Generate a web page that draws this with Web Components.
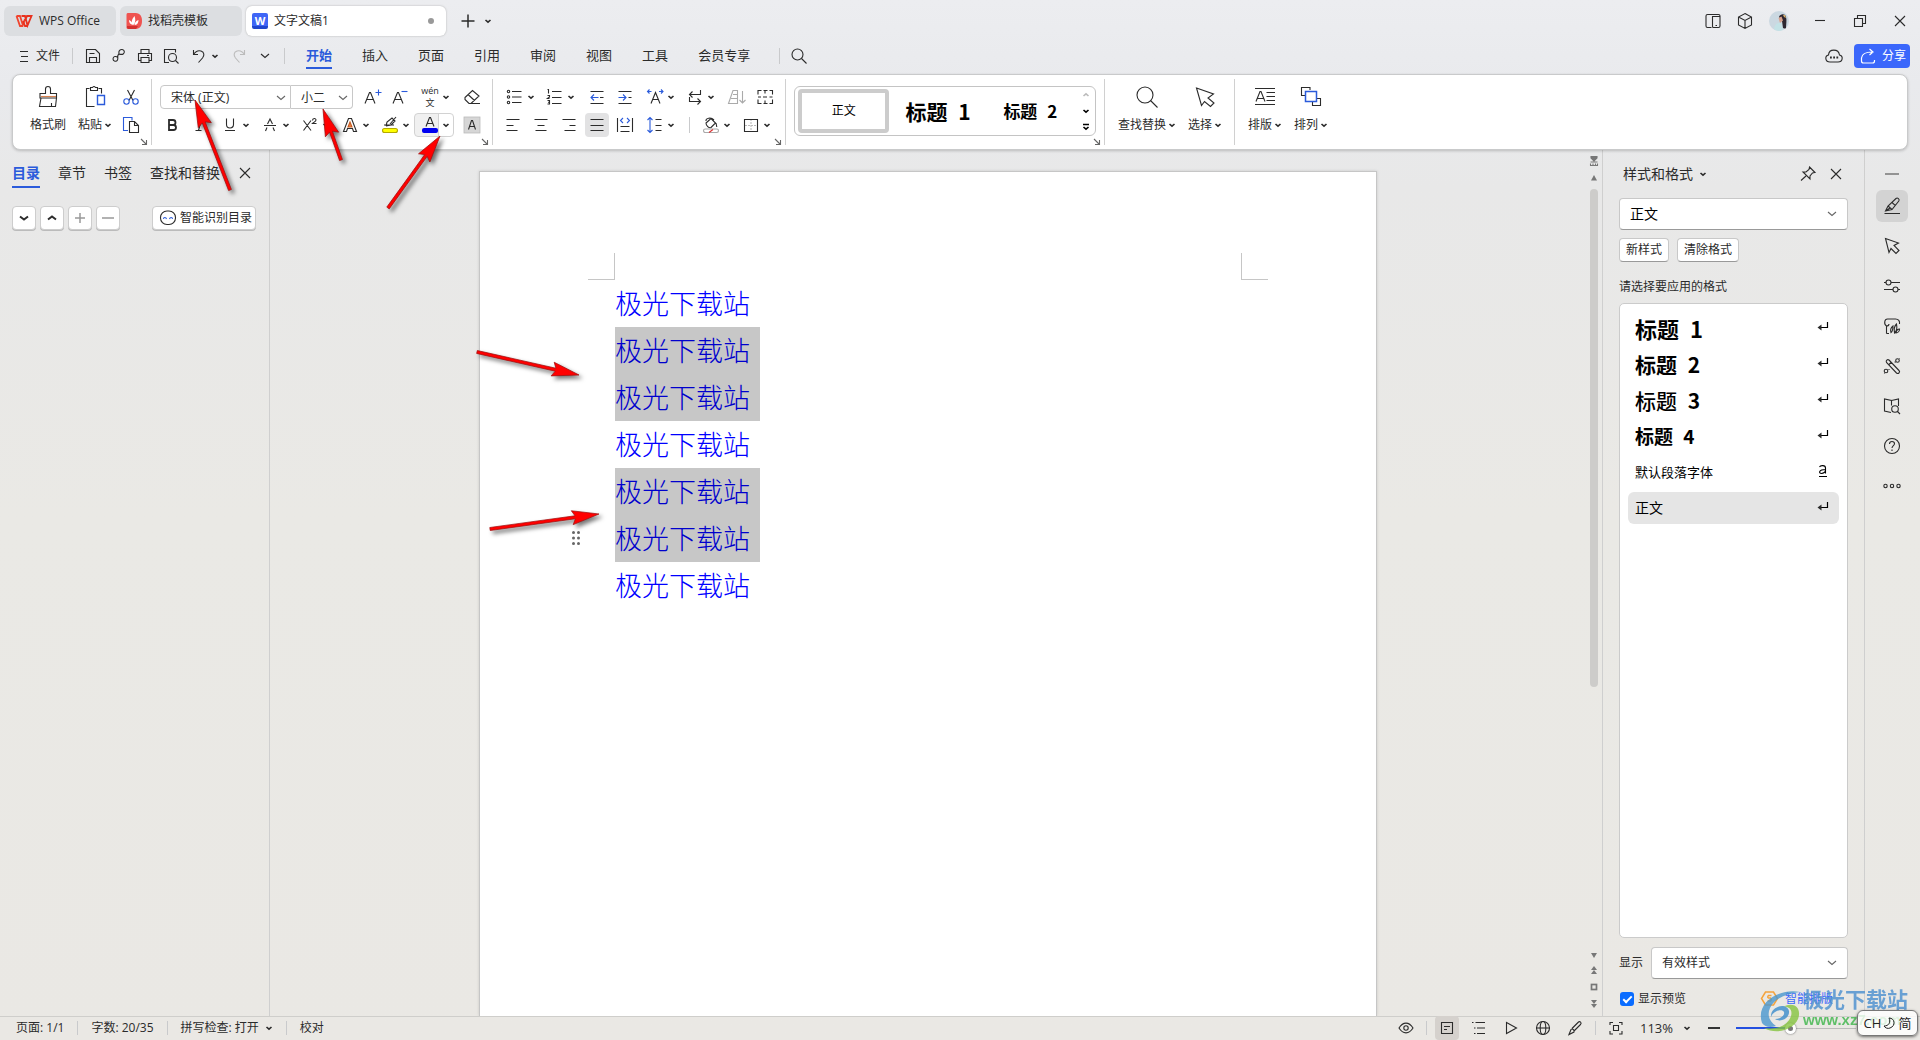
<!DOCTYPE html>
<html lang="zh-CN">
<head>
<meta charset="utf-8">
<title>WPS Office</title>
<style>
html,body{height:100%;margin:0}
body{font:12px/18px "Open Sans","Noto Sans CJK SC",sans-serif;color:#2b2b2b;overflow:hidden;
--blue:#2b5bdb;--line:#cfcfd0}
</style>
</head>
<body>
<wps-app></wps-app>
<script>
const ICONS={
wps:'<path d="M4.500 7h3.500l3 9.500M4.500 7l3.500 10h2.500l2.500-7" stroke="#f0442e" stroke-width="1.800"/><path d="M9.500 7h3.500l2.500 9.500 4-9.500h-4.500l-2 5M15 17h-2l-2-5" stroke="#e8321f" stroke-width="1.800"/>',
daoke:'<path d="M6.500 4h7c5 0 6.500 4 6.500 8s-1.500 8-6.500 8H6.500c-2 0-2-1-2-2V6c0-2 1-2 2-2z" fill="#ef5350" stroke="none"/><path d="M5 17h11l-2 3H7c-2 0-2-1-2-3z" fill="#d3302f" stroke="none"/><path d="M11.500 16c-3-3-1.500-6 1-9 1 3 1.500 6-1 9zM11 16c-3-.5-4-2.500-4-5 2 1 3.500 2.500 4 5zM12.500 16c0-2.500 1.500-4 4-5 0 3-1.500 5-4 5z" fill="#fff" stroke="none"/>',
plus:'<path d="M12 5.500v13M5.500 12h13" stroke-width="1.500"/>',
plusG:'<path d="M12 7v10M7 12h10" stroke="#999" stroke-width="1.500"/>',
minusG:'<path d="M6 12h12" stroke="#999" stroke-width="1.500"/>',
caret:'<path d="M9.500 11l2.500 2.200 2.500-2.200" stroke-width="1.600"/>',
chev:'<path d="M8 10l4 3.500 4-3.500"/>',
down:'<path d="M8 10.500l4 3 4-3" stroke-width="2"/>',
up:'<path d="M8 13.500l4-3 4 3" stroke-width="2"/>',
upG:'<path d="M9.500 13l2.500-2.200 2.500 2.200" stroke="#bbb" stroke-width="1.600"/>',
more:'<path d="M9 9.500h6M9.500 12l2.500 2.200 2.500-2.200" stroke-width="1.600"/>',
menu:'<path d="M8 7.500h8M9 12.500h7M8 17.500h8" stroke-width="1"/>',
save:'<path d="M5.500 5.500h9l4 4v9h-13zM8.500 18v-4.500h7V18M8.500 9.500h5"/>',
link:'<path d="M10.500 13.500c-1-1.500-4.500-1.500-4.500 1.500 0 2.500 3.500 3 4.500 1 .8-1.600-.2-3.500.5-5 .8-1.600 3.500.2 5.200-1 1.800-1.300 1.200-3.500-.2-4.200-1.500-.8-3.500 0-4 1.700-.3 1 .2 2-.3 3.500"/>',
print:'<path d="M8 9V5.500h8V9M8 16.500H5.500V9.500h13v7H16M8 13.500h8v5H8zM14 11.500h2"/>',
preview:'<path d="M10 18.500H5.500v-13h11v3"/><circle cx="13.500" cy="13.500" r="4"/><path d="M16.500 16.500l3 3"/>',
undo:'<path d="M6.500 6v4.500H11M6.500 10.500c2-3 4.500-4.500 7.500-3.500 3.500 1.200 3.500 4.500 1.500 7l-4 4.500" />',
redo:'<path d="M17.500 6v4.500H13M17.500 10.500c-2-3-4.500-4.500-7.500-3.500-3.500 1.200-3.500 4.500-1.500 7l4 4.500" stroke="#bbb"/>',
search:'<circle cx="10.500" cy="10.500" r="5.500"/><path d="M14.500 14.500l5 5"/>',
tablet:'<path d="M10.500 18.500h-4a1.500 1.500 0 0 1-1.500-1.500V7a1.500 1.500 0 0 1 1.500-1.500h11A1.500 1.500 0 0 1 19 7v10a1.500 1.500 0 0 1-1.500 1.500h-5a1 1 0 0 1-1-1v-10M11.500 8v-.5h7M14.500 16.500h1.500"/>',
cube:'<path d="M12 4.500l6.500 3.500v8L12 19.500 5.500 16V8zM5.500 8l6.500 3.500L18.500 8M12 11.500v8"/>',
min:'<path d="M7 11.500h10"/>',restore:'<path d="M6.500 9.500h8v8h-8zM9.500 9.500v-3h8v8h-3"/>',close:'<path d="M7 7l10 10M17 7L7 17"/>',
cloud:'<path d="M8 18c-5 0-5.500-6-1.500-7C7 4.500 16.500 4.500 17.500 11c4 1 3.500 7-1.500 7z"/><path d="M8 13.500h1.800M11.200 13.500h1.800M14.400 13.500h1.800" stroke-width="1.800"/>',
share:'<path d="M5.500 14v3q0 2 2 2h9q2 0 2-2v-1M5.500 14c.5-4 4.500-6 10.500-6M13.500 5l3.500 3-3.500 3" stroke="#fff" stroke-width="1.200"/>',
cut:'<path d="M8.500 5l5.500 10.500M15.500 5L10 15.500"/><circle cx="7.500" cy="16.500" r="2.700" stroke="#2b5bdb"/><circle cx="16.500" cy="16.500" r="2.700" stroke="#2b5bdb"/>',
copy:'<path d="M9 17.500H4.500v-13H13v3" stroke="#2b5bdb"/><path d="M10.500 8.500h5l4 4v7h-9zM15.500 8.500v4h4"/>',
fontUp:'<path d="M5 18.500l4.500-11h1l4.500 11M6.500 14.500h7"/><path d="M15.500 7.500h6M18.500 4.500v6" stroke="#2b5bdb"/>',
fontDn:'<path d="M5 18.500l4.500-11h1l4.500 11M6.500 14.500h7"/><path d="M13.500 6.500h6" stroke="#2b5bdb"/>',
eraser:'<path d="M5 12.500l7.500-7 6.500 5.500-8 7.500H9l-4-4zM8 9.500l6.500 6M10 18.500h10"/>',
bold:'<path d="M9 7h4a2.500 2.500 0 0 1 0 5H9zM9 12h4.500a2.500 2.500 0 0 1 0 5H9z" stroke-width="1.800"/>',
italic:'<path d="M10.500 6.500h6M7.500 17.500h6M13.500 6.500l-3 11"/>',
under:'<path d="M8.500 5.500v6a3.500 3.500 0 0 0 7 0v-6M7 17.500h10"/>',
strike:'<path d="M6 12.500h12M9.500 11L12 6l2.500 5M7.500 18l1.500-3.500M16.500 18L15 14.500"/>',
sup:'<path d="M5.500 7.500l7.500 10M13 7.500l-7.500 10M14.500 7.500c0-2.500 3.500-2.500 3.500-.5 0 1.500-2 2-3.500 3.500h4"/>',
outA:'<path d="M5.500 18.500l5-13h3l5 13h-3l-1-3h-5l-1 3z"/><path d="M10 14l2-5 2 5z" fill="#ee8a4a" stroke="#c55a20"/>',
hilite:'<path d="M8 13l1-4 5-4 3 3-4 4-5 1M6 12l10 0M12 11l6-7"/><rect x="4.500" y="15.500" width="15" height="4" rx="2" fill="#ff0" stroke="#b5a900"/>',
fcolor:'<path d="M8 13.500l3.500-9h1l3.500 9M9.500 10.500h5"/><rect x="4" y="15" width="16" height="5" rx="2" fill="#0000f0" stroke="none"/>',
shadeA:'<rect x="4" y="4" width="16" height="16" fill="#d6d6d6" stroke="#bbb" stroke-width=".8"/><path d="M8.500 16.500l3-9h1l3 9M9.500 13.500h5"/>',
bullets:'<circle cx="5.500" cy="6.500" r="1.200"/><circle cx="5.500" cy="12" r="1.200"/><circle cx="5.500" cy="17.500" r="1.200"/><path d="M9 6.500h9.500M9 12h9.500M9 17.500h9.500"/>',
numbers:'<path d="M4.500 4.500h1v4M4.500 10.500h2v1.500l-2 1.500h2M4.500 15.500h2v3.500h-2M5 17.200h1.500M9 6.500h9.500M9 12.500h9.500M9 18.500h9.500"/>',
outdent:'<path d="M5.500 6.500h13M5.500 18.500h13M15 12.500h3.500"/><path d="M6 12.500h7.500M9 9.500l-3 3 3 3" stroke="#2b5bdb"/>',
indent:'<path d="M5.500 6.500h13M5.500 18.500h13M15.500 12.500h3"/><path d="M5.500 12.500H13M10 9.500l3 3-3 3" stroke="#2b5bdb"/>',
charW:'<path d="M8 18.500l4.500-11 4.500 11M9.500 14.500h6"/><path d="M4.500 6.500h4M6.500 4.500l-2 2 2 2M16 6.500h4M18 4.500l2 2-2 2" stroke="#2b5bdb"/>',
wrap:'<path d="M17.500 5v4.500H6.500M9.500 6.500l-3 3 3 3M6.500 12v4.500h11M14.500 13.500l3 3-3 3"/>',
sort:'<g stroke="#aaa"><path d="M8 5.500h4.500v13h-9zM8 9.500h4.500M6 13.500h6.500M17.500 6v12M14.500 15l3 3 3-3"/></g>',
tabs:'<path d="M5 9.500v-4h3.500M10.500 5.500h4M16.500 5.500h3v4M5 14.500v4h3.500M10.500 18.500h4M16.500 18.500h3v-4M5 12h3M10 12h4M16.500 12h3M12 5.500v3M12 15.500v3"/>',
left:'<path d="M5.500 6.500h13M5.500 12.500h7M5.500 17.500h11"/>',center:'<path d="M5.500 6.500h13M8.500 12.500h7M6.500 17.500h11"/>',right:'<path d="M5.500 6.500h13M12.500 12.500h6M7.500 17.500h11"/>',just:'<path d="M5.500 6.500h13M5.500 12.500h13M5.500 17.500h13"/>',
dist:'<path d="M4.500 5v14M19.500 5v14M7.500 13.500h9M7.500 18.500h9"/><path d="M10 5L7.500 7.500 10 10M14 5l2.500 2.500L14 10" stroke="#2b5bdb"/>',
lsp:'<path d="M12.500 6.500h6M12.500 12.500h6M12.500 17.500h6"/><path d="M7 5v14.500M4.500 7L7 4.500 9.500 7M4.500 17L7 19.500 9.500 17" stroke="#2b5bdb"/>',
shade:'<path d="M7 10l5-4.500 4.500 4.500-4.500 4.500c-2 1-5-2-5-4.500zM7 8c-.5-3 5-4 8-1M17 10l.8 4"/><rect x="4.500" y="16" width="15" height="3.500" rx="1.700" stroke="#aaa"/><path d="M10 19.500l4-3" stroke="#d33"/>',
border:'<path d="M12 6v13M6 12.500h12" stroke="#bbb" stroke-dasharray="2 1"/><path d="M5.500 6.500h13v12h-13z"/>',
corner:'<path d="M9 9l5 5M14.500 10v4.500H10" stroke="#666"/>',
robot:'<rect x="4.500" y="5" width="15" height="13.500" rx="6.500"/><path d="M7.500 13c0-2 2.500-2 3 0M13.500 13c.5-2 3-2 3 0" stroke="#2b5bdb"/>',
pin:'<path d="M13.500 5l5.500 5.500-2.500.5-2.500 3 0 3-7-7 3 0 3-2.500zM10 14l-5 4.500"/>',
pen:'<path d="M4.500 19.500h15.500M5.500 17l2.500-5 8-7.500c1.500-1.300 4 .7 2.800 2.500L12 15.500zM8 12l4 3.500M12 8.500l3.500 3.200M5.500 17l4.500-3"/>',
arrow:'<path d="M5.500 4.500l13 4.500-4.500 2.500 5 5-3 3-5-5-2 4z"/>',
slid:'<circle cx="8.500" cy="8.500" r="2.500"/><circle cx="15.500" cy="15.500" r="2.500"/><path d="M4 8.500h2M11 8.500h9M4 15.500h9M18 15.500h2"/>',
assets:'<path d="M6.500 19.500V12c-3-2-2-7 1-7h8c3 0 4.500 2 4 5M6.500 12c1.500 0 2.500-1 2.500-2M6.500 19.500H9M11 18.500c-1-3 0-5 2-6.500 0 3 0 5-2 6.500zM14.500 19c-1-5 0-7 2-9 .8 4 .5 7-2 9zM16 19c.5-3 2-4 3.500-4 0 2-1.500 4-3.500 4z"/>',
tools:'<path d="M6.500 8.500c-1-2 1-3.500 2.500-2.500l10 10.500c1.500 1.500-.5 4-2.500 2.500zM8.500 11l3-3"/><circle cx="17.500" cy="6.500" r="1.800"/><circle cx="6" cy="17" r="1.800"/><path d="M14.500 8h1.500M9 15v1M19.500 4.500h.5M4.500 19.500v.5"/>',
read:'<path d="M11 18.500l-6.500-1.500v-12l7 1.500v5M11.500 6.500l7-1.500v7"/><circle cx="15" cy="15" r="3.300"/><path d="M17.500 17.500l2.500 2.500"/>',
help:'<circle cx="12" cy="12" r="7.500"/><path d="M9.500 10c0-3.500 5-3.200 5-.3 0 1.800-2.500 2-2.500 4.300M12 15.500v1.500"/>',
dots:'<circle cx="5.500" cy="12" r="1.700"/><circle cx="12" cy="12" r="1.700"/><circle cx="18.500" cy="12" r="1.700"/>',
dash:'<path d="M5 12h14" stroke="#8a8a8a" stroke-width="1.800"/>',
enter:'<path d="M16.500 6v5.500H8" stroke-width="1.200"/><path d="M10.500 8.500l-4 3 4 3z" fill="#2b2b2b" stroke="none"/>',
chara:'<path d="M8.500 7c1-2 6-2 6 1v5.500M14.500 9.500c-7 0-7 4-4 4 2 0 4-1.500 4-3M8 16.500h8"/>',
eye:'<path d="M5 12c4-6.500 10-6.500 14 0-4 6.500-10 6.500-14 0z"/><circle cx="12" cy="12" r="2.200"/>',
doc:'<path d="M6.500 6.500h11v11h-11zM9 10.500h6M9 13.500h3"/>',
outl:'<path d="M5 6.500h1.500M8.500 6.500h9.500M7 12h1.500M10 12h8M7 17.500h1.500M10 17.500h8"/>',
play:'<path d="M7.500 6.500l10 5.500-10 5.500z"/>',
globe:'<circle cx="12" cy="12" r="6.500"/><ellipse cx="12" cy="12" rx="2.800" ry="6.500"/><path d="M5.500 12h13"/>',
brush:'<path d="M6 18.500l2-5c1-1.500 4 .5 3 2.500zM9 12.500l6-6c2-2 4 .5 2.500 2l-6 6"/>',
fit:'<path d="M6 9V6.500h3M15 6.500h3V9M18 15v3h-3M9 18H6v-3M9.500 9.500h5v5h-5z"/>',
coin:'<path d="M8.500 5h8l4 6.500-4 6.500h-8l-4-6.500z" stroke="#f5a33c" stroke-width="1.500"/><path d="M14.500 8.500h-3q-1.500 1.500 0 2.500h2q1.500 1.500 0 3h-3" stroke="#f5a33c" stroke-width="1.500"/>',
sTop:'<path d="M9 6.500h6v1.500l-3 3-3-3zM8.500 12h7M8.500 15.500v-2M11 15.500v-2M13.500 15.500v-2M15.500 15.500v-2M8 15.500h8" fill="#777" stroke="#777"/>',
sUp:'<path d="M12 9l3 5.500h-6z" fill="#777" stroke="none"/>',sDn:'<path d="M12 15l3-5H9z" fill="#777" stroke="none"/>',
sUp2:'<path d="M12 7l3 4H9zM12 11l3 4H9z" fill="#777" stroke="none"/>',sDn2:'<path d="M12 17l3-4H9zM12 13l3-4H9z" fill="#777" stroke="none"/>',
sBox:'<rect x="9.500" y="9.500" width="5" height="5" stroke="#777" stroke-width="1.700"/>',
grip:'<g fill="#666" stroke="none"><circle cx="9.500" cy="6.500" r="1.500"/><circle cx="14.500" cy="6.500" r="1.500"/><circle cx="9.500" cy="12" r="1.500"/><circle cx="14.500" cy="12" r="1.500"/><circle cx="9.500" cy="17.500" r="1.500"/><circle cx="14.500" cy="17.500" r="1.500"/></g>',
painter:'<path d="M6 10.500h5.500V6q0-2.500 2.500-2.500T16.500 6v4.500h6v4.500H6zM7 15l-1.500 8.500h16l1-8.500M17.500 23.500V20" /><path d="M7 13.500h15" stroke="#d9824f"/>',
paste:'<path d="M8.500 5.500H5.500v18h8M20.500 10.500v-5h-3M9.500 4.500h2q1.500-2 3 0h2v3h-7z"/><path d="M16.500 12.500h7v9h-7z" stroke="#2b5bdb" stroke-width="1.400"/>',
find:'<circle cx="12" cy="12" r="8"/><path d="M17.500 17.500l7 7"/>',
select:'<path d="M5.500 5l17 6-5.500 4 6 5-3.500 3.500-6-5-3 4z"/>',
layout:'<path d="M4 5.500h20M4 21.500h20M15.500 9.500h8.500M15.500 13.500h8.500M15.500 17.500h8.500M5 18.500l4-10h1l4 10M6.500 15.500h6"/>',
arrange:'<path d="M8 12.500H4.500v-8H13V7M19.500 15.500h4v7h-8V19"/><path d="M8.500 8.500h11v10h-11z" stroke="#2b5bdb" stroke-width="1.500"/>'
};
function define(name,html,setup){
  customElements.define(name,class extends HTMLElement{
    constructor(){super();this.attachShadow({mode:'open'})}
    connectedCallback(){
      const t=document.createElement('template');
      t.innerHTML='<style>*{box-sizing:border-box}:host{display:block;box-sizing:border-box}button{font:inherit;color:inherit;background:none;border:0;padding:0;margin:0}a{color:inherit;text-decoration:none}</style>'+(typeof html==='function'?html(this):html);
      this.shadowRoot.replaceChildren(t.content.cloneNode(true));
      if(setup)setup(this);
    }
  });
}
const at=(e,n,d='')=>e.getAttribute(n)??d;

define('wps-icon',e=>{const s=+at(e,'size',24);return `<style>:host{display:inline-flex;flex:none}svg{display:block}</style><svg width="${s}" height="${s}" viewBox="0 0 ${s} ${s}" fill="none" stroke="currentColor" stroke-width="1.1" aria-hidden="true">${ICONS[at(e,'name')]||''}</svg>`});
define('wps-caret','<style>:host{width:8px;display:flex;justify-content:center;flex:none}</style><wps-icon name="caret"></wps-icon>');
define('wps-sep',`<style>:host{width:1px;background:#c9cacc;flex:none;height:16px}</style>`);

/* small ribbon command: an icon, or an icon with a drop-down arrow */
define('wps-tool',e=>`<style>:host{flex:none}
button{display:flex;align-items:center;justify-content:center;width:28px;height:24px;border-radius:4px}
:host([split]) button{width:40px;justify-content:flex-start;padding-left:4px}
:host([active]) button{width:24px;background:#e2e2e3}
:host([active]){padding:0 2px}
:host([boxed]) button{border:1px solid #d2d2d2;background:linear-gradient(90deg,#f0f0f0 23px,#d2d2d2 23px,#d2d2d2 24px,#fff 24px);padding-left:3px}
</style><button aria-label="${at(e,'label')}"><slot><wps-icon name="${at(e,'icon')}"></wps-icon></slot>${e.hasAttribute('split')?'<wps-caret></wps-caret>':''}</button>`);

/* large ribbon command: icon above a caption */
define('wps-big',e=>`<style>:host{flex:none;margin-bottom:4px}
button{display:flex;flex-direction:column;align-items:center;height:52px;justify-content:space-between}
.i{display:flex;align-self:stretch;justify-content:center}
span{display:flex;align-items:center;gap:2px;height:20px;white-space:nowrap}
</style><button><div class="i"><wps-icon name="${at(e,'icon')}" size="28"></wps-icon></div><span><slot></slot>${e.hasAttribute('drop')?'<wps-caret></wps-caret>':''}</span></button>`);

define('wps-group',`<style>:host{display:flex;position:relative;border-right:1px solid #d0d0d0;height:66px;flex:none;align-items:center}
:host{padding-bottom:2px}:host([last]){border:0}
.lc{position:absolute;right:-5px;bottom:-9px}</style><slot></slot>`,e=>{if(e.hasAttribute('launch')){const i=document.createElement('wps-icon');i.className='lc';i.setAttribute('name','corner');e.shadowRoot.append(i)}});

/* drop-down box */
define('wps-select',e=>`<style>:host{display:grid;background:#fff;border:1px solid #c8c8c8;border-radius:4px;align-items:center}
select,wps-icon{grid-area:1/1}select{appearance:none;border:0;background:none;font:inherit;color:inherit;width:100%;height:100%;padding:0 16px 0 10px;outline:0}
wps-icon{justify-self:end;pointer-events:none;margin-right:-3px;color:#666}
:host([field]){height:32px;border-bottom-color:#999}:host([field]) wps-icon{margin-right:3px}</style><select aria-label="${at(e,'label')}"><option>${at(e,'value')}</option></select><wps-icon name="chev"></wps-icon>`);

define('wps-titlebar',`<style>:host{display:flex;height:42px;align-items:center;padding-left:4px;flex:none}
.tab{display:flex;align-items:center;height:30px;border-radius:6px;background:#dcdee1;margin-right:4px;padding:0 12px 0 8px;gap:2px}
.t1{width:112px;white-space:nowrap}.t1 wps-icon{margin-right:1px}.t2{width:122px;padding-left:2px}
.t3{width:200px;background:#fff;box-shadow:0 0 2px #aaa;padding-left:2px}
.logo{width:16px;height:16px;margin:0 4px 0 4px;background:linear-gradient(#3f66f6 80%,#1f45cc 80%);border-radius:2px;color:#fff;font:bold 11px/15px "Open Sans",sans-serif;text-align:center}
.dot{width:6px;height:6px;border-radius:3px;background:#999;margin-left:auto}
.new{display:flex;align-items:center;gap:4px;margin-left:6px}
.r{margin-left:auto;display:flex;align-items:center;padding-right:8px;}
.tools{display:flex;gap:8px;align-items:center;margin-right:19px}
.win{display:flex;gap:16px}
.av{display:block;margin-left:4px}
</style>
<button class="tab t1"><wps-icon name="wps"></wps-icon>WPS Office</button>
<button class="tab t2"><wps-icon name="daoke"></wps-icon>找稻壳模板</button>
<button class="tab t3"><span class="logo">W</span>文字文稿1<i class="dot"></i></button>
<button class="new" aria-label="新建"><wps-icon name="plus"></wps-icon><wps-caret></wps-caret></button>
<div class="r"><div class="tools"><wps-icon name="tablet"></wps-icon><wps-icon name="cube"></wps-icon>
<svg class="av" width="20" height="20" viewBox="0 0 20 20" role="img" aria-label="头像"><clipPath id="c"><circle cx="10" cy="10" r="10"/></clipPath><g clip-path="url(#c)"><path fill="#cbd8e1" d="M0 0h20v20H0z"/><path fill="#c3e2e6" d="M5 20c0-6 3-9 7-8l2 8z"/><path fill="#2e2730" d="M10 6c1-3 6-4 7 0 1 3 0 7 0 12l-3-1-1-7z"/><path fill="#d9a48f" d="M9.500 7l3-1.500 1.500 4-3 2.500z"/><path fill="#d8b06a" d="M14 4l2 0 1 3-2-1z"/></g></svg></div>
<div class="win"><wps-icon name="min"></wps-icon><wps-icon name="restore"></wps-icon><wps-icon name="close"></wps-icon></div></div>`);

define('wps-menubar',`<style>:host{display:flex;height:32px;align-items:center;flex:none;padding:0 10px 4px 12px;}
.file{display:flex;align-items:center;margin-right:12px}
.q{display:flex;align-items:center;margin:0 7px 0 8px;gap:2px}
.q wps-tool{margin:0 2px 0 -2px}
nav{display:flex;gap:30px;margin:0 29px 0 21px;font-size:13px}
nav a{display:flex;height:26px;align-items:center;border-bottom:2px solid transparent;}
nav a.on{color:var(--blue);font-weight:700;border-color:var(--blue)}
.find{margin-left:5px}
.r{margin-left:auto;display:flex;align-items:center;gap:8px}
.share{display:flex;align-items:center;gap:2px;background:#3b67fb;color:#fff;height:24px;width:56px;border-radius:4px;padding:0 0 0 2px}
</style>
<button class="file"><wps-icon name="menu"></wps-icon>文件</button><wps-sep></wps-sep>
<div class="q"><wps-icon name="save"></wps-icon><wps-icon name="link"></wps-icon><wps-icon name="print"></wps-icon><wps-icon name="preview"></wps-icon><wps-tool icon="undo" label="撤销" split></wps-tool><wps-icon name="redo"></wps-icon><wps-icon name="chev"></wps-icon></div>
<wps-sep></wps-sep>
<nav><a href="#" class="on">开始</a><a href="#">插入</a><a href="#">页面</a><a href="#">引用</a><a href="#">审阅</a><a href="#">视图</a><a href="#">工具</a><a href="#">会员专享</a></nav>
<wps-sep></wps-sep><wps-tool class="find" icon="search" label="搜索"></wps-tool>
<div class="r"><wps-icon name="cloud"></wps-icon><button class="share"><wps-icon name="share"></wps-icon>分享</button></div>`);

define('wps-ribbon',`<style>:host{display:flex;height:76px;margin:0 12px;background:#fff;border:1px solid #c9cacb;border-radius:8px;box-shadow:0 1px 3px #0003;padding:4px 0;flex:none;position:relative;z-index:1}
.rows{display:flex;flex-direction:column;gap:4px;}
.row{display:flex;align-items:center;height:24px}
.clip{padding:0 6px 2px 17px;width:139px}.clip .rows{margin-left:5px}.clip wps-big+wps-big{margin-left:12px}
.font{padding-left:6px;width:341px}.font .row:first-child{padding:0 0 0 2px}
.para{padding-left:6px;width:293px}
.combo{display:flex;width:193px;margin-right:5px}
.combo wps-select{height:24px;flex:62}.combo wps-select:first-child{flex:131;border-radius:4px 0 0 4px}.combo wps-select+wps-select{border-left:0;border-radius:0 4px 4px 0}
.sp{margin-left:4px}
.wen{display:flex;flex-direction:column;width:24px;text-align:center;font-size:9px;line-height:12px}
.rows wps-sep{margin:0 5px 0 10px}
.gallery{display:flex;align-items:center;width:302px;height:50px;border:1px solid #c4c4c4;border-radius:6px;padding-left:3px;color:#000}
.gallery button{white-space:nowrap}.gallery i{font-style:normal;margin-left:6px}
.sel{width:92px;height:44px;border:4px solid #ccc;border-radius:4px}
.h1{font:700 21px/24px "Noto Sans CJK SC",sans-serif;width:98px}
.h2{font:700 17px/24px "Noto Sans CJK SC",sans-serif;width:88px}
.nav{display:flex;flex-direction:column;margin-left:auto;padding-right:4px}
.nav wps-icon{height:16px;align-items:center;width:24px;margin-right:-7px}
.styles{padding:0 8px 2px 8px}
.big{gap:12px;padding:0 12px 2px 13px}
</style>
<wps-group class="clip" launch><wps-big icon="painter">格式刷</wps-big><wps-big icon="paste" drop>粘贴</wps-big><div class="rows"><wps-tool icon="cut" label="剪切"></wps-tool><wps-tool icon="copy" label="复制"></wps-tool></div></wps-group>
<wps-group class="font" launch><div class="rows"><div class="row"><div class="combo"><wps-select label="字体" value="宋体 (正文)"></wps-select><wps-select label="字号" value="小二"></wps-select></div><wps-tool icon="fontUp" label="增大字号"></wps-tool><wps-tool icon="fontDn" label="减小字号"></wps-tool><wps-tool label="拼音指南" split><span class="wen"><span>wén</span><span>文</span></span></wps-tool><wps-tool class="sp" icon="eraser" label="清除格式"></wps-tool></div>
<div class="row"><wps-tool icon="bold" label="加粗"></wps-tool><wps-tool icon="italic" label="倾斜"></wps-tool><wps-tool icon="under" label="下划线" split></wps-tool><wps-tool icon="strike" label="删除线" split></wps-tool><wps-tool icon="sup" label="上标" split></wps-tool><wps-tool icon="outA" label="文字效果" split></wps-tool><wps-tool icon="hilite" label="突出显示" split></wps-tool><wps-tool icon="fcolor" label="字体颜色" split boxed></wps-tool><wps-tool class="sp" icon="shadeA" label="字符底纹"></wps-tool></div></div></wps-group>
<wps-group class="para" launch><div class="rows"><div class="row"><wps-tool icon="bullets" label="项目符号" split></wps-tool><wps-tool icon="numbers" label="编号" split></wps-tool><wps-tool class="sp" icon="outdent" label="减少缩进量"></wps-tool><wps-tool icon="indent" label="增加缩进量"></wps-tool><wps-tool icon="charW" label="中文版式" split></wps-tool><wps-tool icon="wrap" label="换行" split></wps-tool><wps-tool class="sp" icon="sort" label="排序"></wps-tool><wps-tool icon="tabs" label="制表位"></wps-tool></div>
<div class="row"><wps-tool icon="left" label="左对齐"></wps-tool><wps-tool icon="center" label="居中"></wps-tool><wps-tool icon="right" label="右对齐"></wps-tool><wps-tool icon="just" label="两端对齐" active></wps-tool><wps-tool icon="dist" label="分散对齐"></wps-tool><wps-tool icon="lsp" label="行距" split></wps-tool><wps-sep></wps-sep><wps-tool icon="shade" label="底纹" split></wps-tool><wps-tool icon="border" label="边框" split></wps-tool></div></div></wps-group>
<wps-group class="styles" launch><div class="gallery"><button class="sel">正文</button><button class="h1">标题 <i>1</i></button><button class="h2">标题 <i>2</i></button><div class="nav"><wps-icon name="upG"></wps-icon><wps-icon name="caret"></wps-icon><wps-icon name="more"></wps-icon></div></div></wps-group>
<wps-group class="big"><wps-big icon="find" drop>查找替换</wps-big><wps-big icon="select" drop>选择</wps-big></wps-group>
<wps-group class="big" last><wps-big icon="layout" drop>排版</wps-big><wps-big icon="arrange" drop>排列</wps-big></wps-group>`);

define('wps-nav-pane',`<style>:host{width:270px;flex:none;border-right:1px solid #cfcfcf;padding:8px 12px}
nav{display:flex;gap:18px;font-size:14px;height:30px;}
nav a{display:flex;align-items:center;border-bottom:2px solid transparent;white-space:nowrap;padding-top:2px}
nav a.on{color:var(--blue);font-weight:700;border-color:var(--blue)}
nav wps-icon{align-self:center;margin-left:-5px}
.bar{display:flex;gap:4px;margin-top:18px}
button{background:#fff;border:1px solid #cdcdcd;border-radius:4px;height:24px;width:24px;display:flex;align-items:center;justify-content:center;box-shadow:0 1px 0 #bbb}
.smart{width:104px;margin-left:auto;margin-right:1px;white-space:nowrap}</style>
<nav><a href="#" class="on">目录</a><a href="#">章节</a><a href="#">书签</a><a href="#">查找和替换</a><wps-icon name="close"></wps-icon></nav>
<div class="bar"><button aria-label="展开"><wps-icon name="down"></wps-icon></button><button aria-label="折叠"><wps-icon name="up"></wps-icon></button><button aria-label="增加"><wps-icon name="plusG"></wps-icon></button><button aria-label="减少"><wps-icon name="minusG"></wps-icon></button><button class="smart"><wps-icon name="robot"></wps-icon>智能识别目录</button></div>`);

define('wps-line',`<style>:host{width:fit-content;height:47px;line-height:45px;padding-right:10px;white-space:nowrap}:host([selected]){background:#c7c7c7;color:#0000cd}</style><slot></slot>`);

define('wps-canvas',`<style>:host{display:flex;flex:1;min-width:0}
.view{flex:1;display:flex;justify-content:center;padding-top:21px;overflow:hidden}
.page{width:898px;background:#fff;border:1px solid #c6c6c6;border-bottom:0;box-shadow:0 0 3px #0002;padding:81px 108px 0}
.marks{display:flex;justify-content:space-between}
.marks i{width:27px;height:27px;border:solid #c6c6c6;border-width:0 1px 1px 0}.marks i+i{border-width:0 0 1px 1px}
.text{position:relative;margin:0 27px;font:300 27px/45px "Noto Sans CJK SC",sans-serif;color:#0000ff}
.grip{position:absolute;left:-51px;top:246px;line-height:0}
.sb{width:16px;display:flex;flex-direction:column;align-items:center;padding:4px 0 5px}
.sb wps-icon{height:16px;align-items:center}
.track{flex:1;width:8px;margin:3px 0}.track i{display:block;height:66%;background:#cdccca;border-radius:4px}
</style>
<div class="view"><div class="page"><div class="marks"><i></i><i></i></div><div class="text">
<wps-line>极光下载站</wps-line><wps-line selected>极光下载站</wps-line><wps-line selected>极光下载站</wps-line><wps-line>极光下载站</wps-line><wps-line selected>极光下载站</wps-line><wps-line selected>极光下载站</wps-line><wps-line>极光下载站</wps-line><span class="grip"><wps-icon name="grip"></wps-icon></span></div></div></div>
<div class="sb"><wps-icon name="sTop"></wps-icon><wps-icon name="sUp"></wps-icon><div class="track"><i></i></div><wps-icon name="sDn"></wps-icon><wps-icon name="sUp2"></wps-icon><wps-icon name="sBox"></wps-icon><wps-icon name="sDn2"></wps-icon></div>`);

define('wps-style-item',e=>`<style>:host{height:32px;margin-bottom:4px;padding:0 4px 0 7px;border-radius:6px;display:flex;align-items:center;justify-content:space-between;color:#000}
:host([selected]){background:#e5e5e5;font-size:14px}:host([head]){font:700 21px/30px "Noto Sans CJK SC",sans-serif}
:host([head=h1]){font-size:22px}:host([head=h3]){font-weight:500}:host([head=h4]){font-size:19px}
::slotted(i){font-style:normal;font-weight:700;margin-left:6px}
button{flex:1;text-align:left}</style><button><slot></slot></button><wps-icon name="${at(e,'mark','enter')}"></wps-icon>`);

define('wps-style-pane',`<style>:host{width:263px;flex:none;border-left:1px solid #cfcfcf;border-right:1px solid #cfcfcf;padding:11px 16px 5px 16px;display:flex;flex-direction:column}
header{display:flex;align-items:center;font-size:14px;height:26px;padding-left:4px}
header .x{margin-left:auto;display:flex;gap:4px}
header wps-caret{margin-left:6px}
.top{margin-top:11px;font-size:14px;color:#000}
.btns{display:flex;gap:8px;margin:8px 0 16px}
.btns button{background:#fff;border:1px solid #c8c8c8;border-bottom-color:#999;border-radius:4px;height:24px;padding:0 6px}
.list{flex:1;background:#fff;border:1px solid #cbcbcb;border-radius:5px;margin-top:7px;padding:8px}
.small{font-size:13px}
.show{display:flex;align-items:center;gap:8px;margin-top:9px}.show wps-select{flex:1}
.opt{display:flex;align-items:center;margin-top:8px;height:24px}
.opt label{display:flex;align-items:center;gap:4px}
input{appearance:none;width:14px;height:14px;margin:0 0 0 1px;border-radius:3px;background:#0a6cff;display:grid;place-items:center}
input::after{content:"";width:7px;height:3px;border:solid #fff;border-width:0 0 2px 2px;rotate:-45deg;margin-top:-2px}
.opt a{margin-left:auto;display:flex;align-items:center;gap:2px;color:#3b67fb;padding-right:15px}
.opt a wps-icon{margin-right:2px}
</style>
<header>样式和格式<wps-caret></wps-caret><span class="x"><wps-icon name="pin"></wps-icon><wps-icon name="close"></wps-icon></span></header>
<wps-select field class="top" label="当前样式" value="正文"></wps-select>
<div class="btns"><button>新样式</button><button>清除格式</button></div>
<span>请选择要应用的格式</span>
<div class="list"><wps-style-item head="h1">标题 <i>1</i></wps-style-item><wps-style-item head="h2">标题 <i>2</i></wps-style-item><wps-style-item head="h3">标题 <i>3</i></wps-style-item><wps-style-item head="h4">标题 <i>4</i></wps-style-item><wps-style-item mark="chara" class="small">默认段落字体</wps-style-item><wps-style-item selected>正文</wps-style-item></div>
<div class="show"><span>显示</span><wps-select field label="显示" value="有效样式"></wps-select></div>
<div class="opt"><label><input type="checkbox" checked>显示预览</label><a href="#"><wps-icon name="coin"></wps-icon>智能排版</a></div>`);

define('wps-side',`<style>:host{width:55px;flex:none;display:flex;flex-direction:column;align-items:center;gap:8px;padding:8px 1px 0 0}
button{width:32px;height:32px;border-radius:6px;display:flex;align-items:center;justify-content:center}
button:nth-of-type(2){background:#d3d3d3}button:first-of-type{margin-bottom:-8px}</style>
${['dash','pen','arrow','slid','assets','tools','read','help','dots'].map((n,i)=>`<button aria-label="工具${i}"><wps-icon name="${n}"></wps-icon></button>`).join('')}`);

define('wps-status',`<style>:host{display:flex;height:24px;flex:none;border-top:1px solid #cfcecb;align-items:center;padding:0 64px 1px 16px}
.l,.r{display:flex;align-items:center}.l{gap:13px}.l span{display:flex;gap:6px;white-space:nowrap}
wps-sep{height:14px}wps-caret{height:18px;align-items:center}
.r{margin-left:auto}.r wps-icon{margin-right:8px}.r .on{background:#d5d1cd;border-radius:4px}
.r wps-sep{margin-right:8px}
.out{margin-left:9px}
input{appearance:none;width:120px;height:12px;margin:0 0 0 8px;background:linear-gradient(#2450e0,#2450e0) 0 5px/54px 2px no-repeat,linear-gradient(#bbb,#bbb) 0 6px/100% 1px no-repeat}
input::-webkit-slider-thumb{appearance:none;width:11px;height:11px;border-radius:6px;background:#777;border:3px solid #fff;box-shadow:0 0 2px #555}
.pct{margin:0 10px 0 4px;font-size:13px}
</style>
<div class="l"><span>页面: 1/1</span><wps-sep></wps-sep><span>字数: 20/35</span><wps-sep></wps-sep><span>拼写检查: 打开<wps-caret></wps-caret></span><wps-sep></wps-sep><span>校对</span></div>
<div class="r"><wps-icon name="eye"></wps-icon><wps-sep></wps-sep><wps-icon class="on" name="doc"></wps-icon><wps-icon name="outl"></wps-icon><wps-icon name="play"></wps-icon><wps-icon name="globe"></wps-icon><wps-icon name="brush"></wps-icon><wps-sep></wps-sep><wps-icon name="fit"></wps-icon><span class="pct">113%</span><wps-caret></wps-caret><wps-tool class="out" label="缩小"><svg width="12" height="2"><path fill="#333" d="M0 0h12v2H0z"/></svg></wps-tool><input type="range" aria-label="缩放" min="0" max="100" value="45"></div>`);

/* red pointers drawn over the window */
const arrow=(x1,y1,x2,y2)=>{const L=Math.hypot(x2-x1,y2-y1),a=Math.atan2(y2-y1,x2-x1)*180/Math.PI;
return `<path transform="translate(${x1} ${y1}) rotate(${a})" d="M0-1.500L${L-24}-1.500 ${L-27}-7 ${L} 0 ${L-27} 7 ${L-24} 1.500 0 1.500z"/>`};
define('wps-pointers',`<style>:host{position:absolute;inset:0;pointer-events:none;z-index:5}svg{display:block;filter:drop-shadow(3px 3px 2px #0008)}</style>
<svg width="1920" height="1040" fill="#f00" stroke="#a01010" stroke-width=".7">${arrow(230,190,195,100)+arrow(341,160,323,109)+arrow(388,208,440,136)+arrow(477,352,579,375)+arrow(490,529,599,514)}</svg>`);

define('wps-watermark',`<style>:host{position:absolute;right:2px;bottom:4px;z-index:4;pointer-events:none;display:flex;align-items:flex-start;width:160px;height:50px;line-height:1}
.mk{display:flex;opacity:.8;gap:1px}
svg{display:block}.mk svg{margin-top:4px}
.tx{display:flex;flex-direction:column;gap:1px;white-space:nowrap}
b{font:700 21px/24px "Noto Sans CJK SC",sans-serif;color:#4a8fd0}
em{font:bold 15px/18px "Liberation Sans",sans-serif;color:#3db54a}
.ime{position:absolute;right:0;bottom:0;width:61px;height:26px;background:#fffc;border:1px solid #777;border-radius:6px;box-shadow:0 1px 3px #0008;display:flex;align-items:center;justify-content:center;gap:2px;font-size:13px;color:#222}
</style><div class="mk"><svg width="44" height="44" viewBox="0 0 44 44"><path d="M4 33C-3 12 22-2 42 2 28 4 17 8 12 18c-3 7-1 13 6 18-6 2-11 1-14-3z" fill="#4a97cf"/><path d="M6 38c14 2 24-3 27-12 2-7-3-10-8-9 9-5 17-1 16 8C40 38 20 46 6 38z" fill="#86c440"/><path d="M13 27c-1-11 16-15 18-6 1 7-8 12-14 8 6 0 10-4 9-7-2-4-11-1-13 5z" fill="#3b8ccc"/></svg><div class="tx"><b>极光下载站</b><em>www.xz7.com</em></div></div><div class="ime"><span>CH</span><svg width="13" height="13" viewBox="0 0 13 13" fill="none" stroke="#222"><path d="M6 1c6 0 7 8 1 10-2 1-5 0-6-2 5 0 7-4 5-8z"/></svg><span>简</span></div>`);

define('wps-app',`<style>:host{display:flex;flex-direction:column;height:100vh;position:relative;overflow:hidden;background:linear-gradient(180deg,#ecedf0 0,#e9eaed 8%,#e8e8e8 18%,#eae9e5 50%,#eae8e4 100%)}
main{flex:1;display:flex;min-height:0}</style>
<wps-titlebar></wps-titlebar><wps-menubar></wps-menubar><wps-ribbon></wps-ribbon>
<main><wps-nav-pane></wps-nav-pane><wps-canvas></wps-canvas><wps-style-pane></wps-style-pane><wps-side></wps-side></main>
<wps-status></wps-status><wps-watermark></wps-watermark><wps-pointers></wps-pointers>`);
</script>
</body>
</html>
